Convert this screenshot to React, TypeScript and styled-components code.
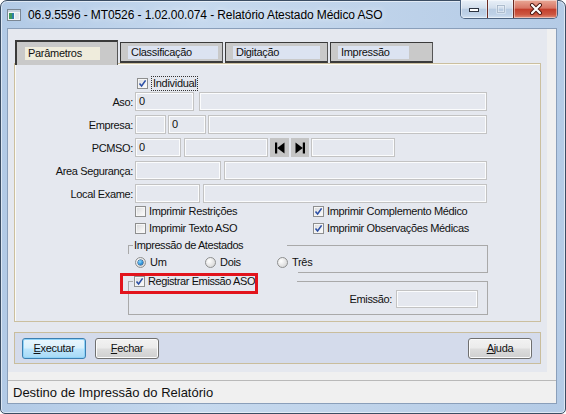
import React from 'react';
import styled, { createGlobalStyle } from 'styled-components';

const GlobalStyle = createGlobalStyle`
  html, body {
    margin: 0;
    padding: 0;
  }
  body {
    width: 566px;
    height: 414px;
    overflow: hidden;
    background: #ffffff;
    font-family: "Liberation Sans", Arial, sans-serif;
  }
  * {
    box-sizing: border-box;
  }
`;

const Window = styled.div`
  width: 566px;
  height: 414px;
  display: flex;
  flex-direction: column;
  border: 1px solid #3b4d63;
  border-radius: 7px 7px 5px 5px;
  padding: 0 8px 9px 6px;
  background: linear-gradient(90deg, #b2cae6 0%, #c6d9ee 35%, #bfd3ea 65%, #b4cbe6 100%);
  box-shadow: inset 0 0 0 1px rgba(255, 255, 255, 0.55);
`;

const TitleBar = styled.div`
  height: 27px;
  display: flex;
  align-items: center;
  flex-shrink: 0;
`;

const TitleText = styled.span`
  margin-left: 7px;
  font-size: 12px;
  color: #000;
  letter-spacing: -0.1px;
  text-shadow: 0 0 6px rgba(255, 255, 255, 0.9);
`;

const Captions = styled.div`
  margin-left: auto;
  margin-right: -1px;
  align-self: flex-start;
  margin-top: -1px;
  display: flex;
  height: 19px;
  border: 1px solid #4d6380;
  border-top: none;
  border-radius: 0 0 5px 5px;
  overflow: hidden;
`;

const CaptionButton = styled.div<{ $w: number; $close?: boolean }>`
  width: ${(p) => p.$w}px;
  height: 100%;
  display: flex;
  align-items: center;
  justify-content: center;
  box-shadow: inset 0 0 0 1px rgba(255, 255, 255, 0.45);
  background: ${(p) =>
    p.$close
      ? 'linear-gradient(180deg, #e9a896 0%, #d87564 45%, #c43f2c 52%, #cc5640 80%, #e1907b 100%)'
      : 'linear-gradient(180deg, #e9f0f8 0%, #d2deec 45%, #b9cce2 52%, #bed1e7 80%, #d3e2f2 100%)'};
  & + & {
    border-left: 1px solid ${(p) => (p.$close ? '#6b2a22' : '#7f94ae')};
  }
`;

const Client = styled.div`
  flex: 1;
  display: flex;
  flex-direction: column;
  background: #f0f0f0;
  border: 1px solid #8a9fba;
`;

const FormArea = styled.div`
  width: 539px;
  height: 343px;
  background: #e5e8ef;
  padding: 11px 0 0 6px;
  display: flex;
  flex-direction: column;
`;

const TabStrip = styled.div`
  height: 23px;
  display: flex;
  align-items: flex-end;
  gap: 2px;
  padding-left: 1px;
  position: relative;
  z-index: 1;
`;

const Tab = styled.div<{ $active?: boolean }>`
  width: 103px;
  height: ${(p) => (p.$active ? 25 : 21)}px;
  margin-bottom: ${(p) => (p.$active ? -2 : 0)}px;
  background: #c9c9c9;
  border: 1px solid #3a3a3a;
  border-top-width: ${(p) => (p.$active ? 2 : 1)}px;
  border-left-width: ${(p) => (p.$active ? 2 : 1)}px;
  border-right-color: #555;
  border-bottom: ${(p) => (p.$active ? 'none' : '2px solid #3a3a3a')};
  display: flex;
  align-items: ${(p) => (p.$active ? 'flex-start' : 'center')};
  padding-top: ${(p) => (p.$active ? 5 : 0)}px;
  padding-left: ${(p) => (p.$active ? 8 : 7)}px;
`;

const TabLabel = styled.span<{ $active?: boolean; $w: number }>`
  width: ${(p) => p.$w}px;
  height: 13px;
  line-height: 13px;
  padding-left: 3px;
  font-size: 11px;
  letter-spacing: -0.3px;
  color: #111;
  background: ${(p) => (p.$active ? '#efecdc' : '#dce3f1')};
`;

const TabPage = styled.div`
  width: 527px;
  height: 259px;
  border: 1px solid #cbbf9f;
  box-shadow: inset 1px 1px 0 #fbfaf4;
  display: flex;
  flex-direction: column;
  padding-top: 13px;
`;

const IndividualRow = styled.div`
  height: 13px;
  margin-left: 122px;
  display: flex;
  align-items: center;
  gap: 3px;
`;

const FocusLabel = styled.span`
  font-size: 11px;
  letter-spacing: -0.3px;
  line-height: 13px;
  padding: 0 1px;
  border: 1px dotted #333;
  color: #111;
`;

const Fields = styled.div`
  margin-top: 2px;
  display: flex;
  flex-direction: column;
  gap: 4px;
`;

const Row = styled.div`
  height: 19px;
  display: flex;
  align-items: center;
`;

const FieldLabel = styled.span<{ $auto?: boolean }>`
  width: ${(p) => (p.$auto ? 'auto' : '118px')};
  margin-right: ${(p) => (p.$auto ? 0 : 2)}px;
  text-align: right;
  font-size: 11px;
  letter-spacing: -0.35px;
  color: #111;
`;

const Field = styled.div<{ $w: number; $ml?: number; $h?: number }>`
  width: ${(p) => p.$w}px;
  height: ${(p) => p.$h ?? 19}px;
  margin-left: ${(p) => p.$ml ?? 0}px;
  border: 1px solid #c3c3c3;
  box-shadow: inset 0 0 0 1px rgba(255, 255, 255, 0.85);
  font-size: 11px;
  line-height: 17px;
  padding-left: 3px;
  color: #111;
`;

const NavButton = styled.div<{ $w: number; $ml?: number }>`
  width: ${(p) => p.$w}px;
  height: 19px;
  margin-left: ${(p) => p.$ml ?? 0}px;
  background: #c4c4c4;
  display: flex;
  align-items: center;
  justify-content: center;
`;

const CheckGrid = styled.div`
  margin: 1px 0 0 120px;
  display: grid;
  grid-template-columns: 178px auto;
  row-gap: 3px;
`;

const CheckItem = styled.label`
  height: 14px;
  display: flex;
  align-items: center;
  gap: 3px;
  font-size: 11px;
  letter-spacing: -0.35px;
  color: #111;
`;

const Box = styled.span`
  width: 11px;
  height: 11px;
  flex-shrink: 0;
  border: 1px solid #8e8f8f;
  background: linear-gradient(135deg, #d6d8db 0%, #f0f0f0 60%, #fdfdfd 100%);
  box-shadow: inset 0 0 0 1px #f6f6f6;
  display: flex;
  align-items: center;
  justify-content: center;
`;

const Group = styled.fieldset<{ $mt: number }>`
  margin: ${(p) => p.$mt}px 0 0 113px;
  width: 360px;
  padding: 0;
  border: 1px solid #a9a9a9;
  min-width: 0;
`;

const GroupTitle = styled.legend<{ $w: number }>`
  width: ${(p) => p.$w}px;
  margin-left: 4px;
  padding: 0 0 0 1px;
  height: 13px;
  line-height: 13px;
  font-size: 11px;
  letter-spacing: -0.4px;
  color: #111;
  background: #e5e8ef;
  position: relative;
  display: flex;
  align-items: center;
  gap: 3px;
`;

const RadioRow = styled.div`
  position: relative;
  top: 2px;
  left: -1px;
  width: 170px;
  height: 20px;
  background: #e5e8ef;
  display: flex;
  align-items: flex-start;
  padding: 3px 0 0 7px;
`;

const RadioItem = styled.label<{ $w?: number }>`
  width: ${(p) => (p.$w ? `${p.$w}px` : 'auto')};
  flex-shrink: 0;
  display: flex;
  align-items: center;
  gap: 4px;
  font-size: 11px;
  letter-spacing: -0.3px;
  line-height: 11px;
  color: #111;
  white-space: nowrap;
`;

const RadioDot = styled.span<{ $on?: boolean }>`
  width: 11px;
  height: 11px;
  border-radius: 50%;
  border: 1px solid #8e8f8f;
  background: radial-gradient(circle at 35% 35%, #ffffff 0%, #e4e4e4 55%, #cfcfcf 100%);
  display: flex;
  align-items: center;
  justify-content: center;
  &::after {
    content: '';
    display: ${(p) => (p.$on ? 'block' : 'none')};
    width: 5px;
    height: 5px;
    border-radius: 50%;
    background: radial-gradient(circle at 40% 35%, #8fdcff 0%, #2a8fd8 55%, #10508f 100%);
    box-shadow: 0 0 0 0.5px #0d3f73;
  }
`;

const Highlight = styled.span`
  position: absolute;
  left: -13px;
  top: -2px;
  width: 138px;
  height: 21px;
  border: 3px solid #e2141c;
  pointer-events: none;
`;

const EmissionRow = styled.div`
  margin-top: 2px;
  padding: 0 9px 6px 0;
  display: flex;
  justify-content: flex-end;
  align-items: center;
  gap: 4px;
`;

const ButtonPanel = styled.div`
  margin-top: 10px;
  width: 527px;
  height: 32px;
  background: #d4dbeb;
  border: 1px solid #c9bd9c;
  display: flex;
  align-items: center;
  padding: 0 8px 0 7px;
  gap: 9px;
`;

const Button = styled.button<{ $default?: boolean; $right?: boolean }>`
  width: 64px;
  height: 21px;
  margin-left: ${(p) => (p.$right ? 'auto' : '0')};
  border-radius: 3px;
  border: 1px solid ${(p) => (p.$default ? '#3c7fb1' : '#707070')};
  background: ${(p) =>
    p.$default
      ? 'linear-gradient(180deg, #eaf6fd 0%, #d9f0fc 48%, #bee6fd 52%, #a7d9f5 100%)'
      : 'linear-gradient(180deg, #f2f2f2 0%, #ebebeb 48%, #dddddd 52%, #cfcfcf 100%)'};
  box-shadow: inset 0 0 0 1px ${(p) => (p.$default ? '#8fd3f8' : '#fbfbfb')};
  font-family: "Liberation Sans", Arial, sans-serif;
  font-size: 11px;
  letter-spacing: -0.3px;
  color: #111;
  padding: 0;
`;

const StatusBar = styled.div`
  margin-top: 8px;
  flex: 1;
  border-top: 1px solid #b9b9b9;
  display: flex;
  align-items: center;
  padding-left: 5px;
  font-size: 13px;
  color: #111;
`;

const Check: React.FC<{ on?: boolean }> = ({ on }) => (
  <Box>
    {on && (
      <svg width="9" height="9" viewBox="0 0 9 9">
        <path d="M1.5 4.5 L3.6 7 L7.6 1.4" fill="none" stroke="#2b4fa6" strokeWidth="1.6" />
      </svg>
    )}
  </Box>
);

const AppIcon = () => (
  <svg width="14" height="12" viewBox="0 0 14 12">
    <rect x="0.5" y="0.5" width="13" height="11" fill="#f4f6f8" stroke="#7b8794" />
    <rect x="1" y="1" width="12" height="2" fill="#c9d3de" />
    <rect x="2" y="4" width="3" height="6" fill="#3f9a5c" />
    <rect x="5" y="4" width="2" height="6" fill="#2f7fa6" />
    <rect x="8" y="4" width="4" height="6" fill="#e2e6ea" />
  </svg>
);

const MinIcon = () => (
  <svg width="12" height="8" viewBox="0 0 12 8">
    <rect x="1.5" y="3.5" width="9" height="3" fill="#fff" stroke="#2b3340" />
  </svg>
);

const MaxIcon = () => (
  <svg width="12" height="10" viewBox="0 0 12 10">
    <rect x="2.5" y="1.5" width="7" height="7" fill="none" stroke="#eef3f9" strokeWidth="2" />
    <rect x="2.5" y="1.5" width="7" height="7" fill="none" stroke="#9fb0c4" strokeWidth="0.8" />
  </svg>
);

const CloseIcon = () => (
  <svg width="14" height="12" viewBox="0 0 14 12">
    <path d="M3 2 L11 10 M11 2 L3 10" stroke="#4a1710" strokeWidth="4" strokeLinecap="round" />
    <path d="M3 2 L11 10 M11 2 L3 10" stroke="#fff" strokeWidth="2.2" strokeLinecap="round" />
  </svg>
);

const FirstIcon = () => (
  <svg width="12" height="12" viewBox="0 0 12 12">
    <rect x="1" y="0.5" width="2.2" height="11" fill="#000" />
    <polygon points="10.5,0.5 3.2,6 10.5,11.5" fill="#000" />
  </svg>
);

const LastIcon = () => (
  <svg width="12" height="12" viewBox="0 0 12 12">
    <polygon points="1.5,0.5 8.8,6 1.5,11.5" fill="#000" />
    <rect x="8.8" y="0.5" width="2.2" height="11" fill="#000" />
  </svg>
);

const TABS = [
  { label: 'Parâmetros', w: 75, active: true },
  { label: 'Classificação', w: 90 },
  { label: 'Digitação', w: 87 },
  { label: 'Impressão', w: 71 },
];

export default function App() {
  return (
    <>
      <GlobalStyle />
      <Window>
        <TitleBar>
          <AppIcon />
          <TitleText>06.9.5596 - MT0526 - 1.02.00.074 - Relatório Atestado Médico ASO</TitleText>
          <Captions>
            <CaptionButton $w={26}>
              <MinIcon />
            </CaptionButton>
            <CaptionButton $w={26}>
              <MaxIcon />
            </CaptionButton>
            <CaptionButton $w={44} $close>
              <CloseIcon />
            </CaptionButton>
          </Captions>
        </TitleBar>
        <Client>
          <FormArea>
            <TabStrip>
              {TABS.map((t) => (
                <Tab key={t.label} $active={t.active}>
                  <TabLabel $active={t.active} $w={t.w}>
                    {t.label}
                  </TabLabel>
                </Tab>
              ))}
            </TabStrip>
            <TabPage>
              <IndividualRow>
                <Check on />
                <FocusLabel>Individual</FocusLabel>
              </IndividualRow>
              <Fields>
                <Row>
                  <FieldLabel>Aso:</FieldLabel>
                  <Field $w={59}>0</Field>
                  <Field $w={288} $ml={5} />
                </Row>
                <Row>
                  <FieldLabel>Empresa:</FieldLabel>
                  <Field $w={31} />
                  <Field $w={38} $ml={2}>0</Field>
                  <Field $w={279} $ml={2} />
                </Row>
                <Row>
                  <FieldLabel>PCMSO:</FieldLabel>
                  <Field $w={46}>0</Field>
                  <Field $w={84} $ml={3} />
                  <NavButton $w={19} $ml={2}>
                    <FirstIcon />
                  </NavButton>
                  <NavButton $w={18} $ml={2}>
                    <LastIcon />
                  </NavButton>
                  <Field $w={84} $ml={2} />
                </Row>
                <Row>
                  <FieldLabel>Area Segurança:</FieldLabel>
                  <Field $w={86} />
                  <Field $w={263} $ml={3} />
                </Row>
                <Row>
                  <FieldLabel>Local Exame:</FieldLabel>
                  <Field $w={65} />
                  <Field $w={284} $ml={3} />
                </Row>
              </Fields>
              <CheckGrid>
                <CheckItem>
                  <Check />
                  Imprimir Restrições
                </CheckItem>
                <CheckItem>
                  <Check on />
                  Imprimir Complemento Médico
                </CheckItem>
                <CheckItem>
                  <Check />
                  Imprimir Texto ASO
                </CheckItem>
                <CheckItem>
                  <Check on />
                  Imprimir Observações Médicas
                </CheckItem>
              </CheckGrid>
              <Group $mt={4}>
                <GroupTitle $w={154}>Impressão de Atestados</GroupTitle>
                <RadioRow>
                  <RadioItem $w={70}>
                    <RadioDot $on />
                    Um
                  </RadioItem>
                  <RadioItem $w={72}>
                    <RadioDot />
                    Dois
                  </RadioItem>
                  <RadioItem>
                    <RadioDot />
                    Três
                  </RadioItem>
                </RadioRow>
              </Group>
              <Group $mt={2}>
                <GroupTitle $w={164}>
                  <Highlight />
                  <Check on />
                  Registrar Emissão ASO
                </GroupTitle>
                <EmissionRow>
                  <FieldLabel $auto>Emissão:</FieldLabel>
                  <Field $w={82} $h={18} />
                </EmissionRow>
              </Group>
            </TabPage>
            <ButtonPanel>
              <Button $default>
                <u>E</u>xecutar
              </Button>
              <Button>
                <u>F</u>echar
              </Button>
              <Button $right>
                <u>A</u>juda
              </Button>
            </ButtonPanel>
          </FormArea>
          <StatusBar>Destino de Impressão do Relatório</StatusBar>
        </Client>
      </Window>
    </>
  );
}
